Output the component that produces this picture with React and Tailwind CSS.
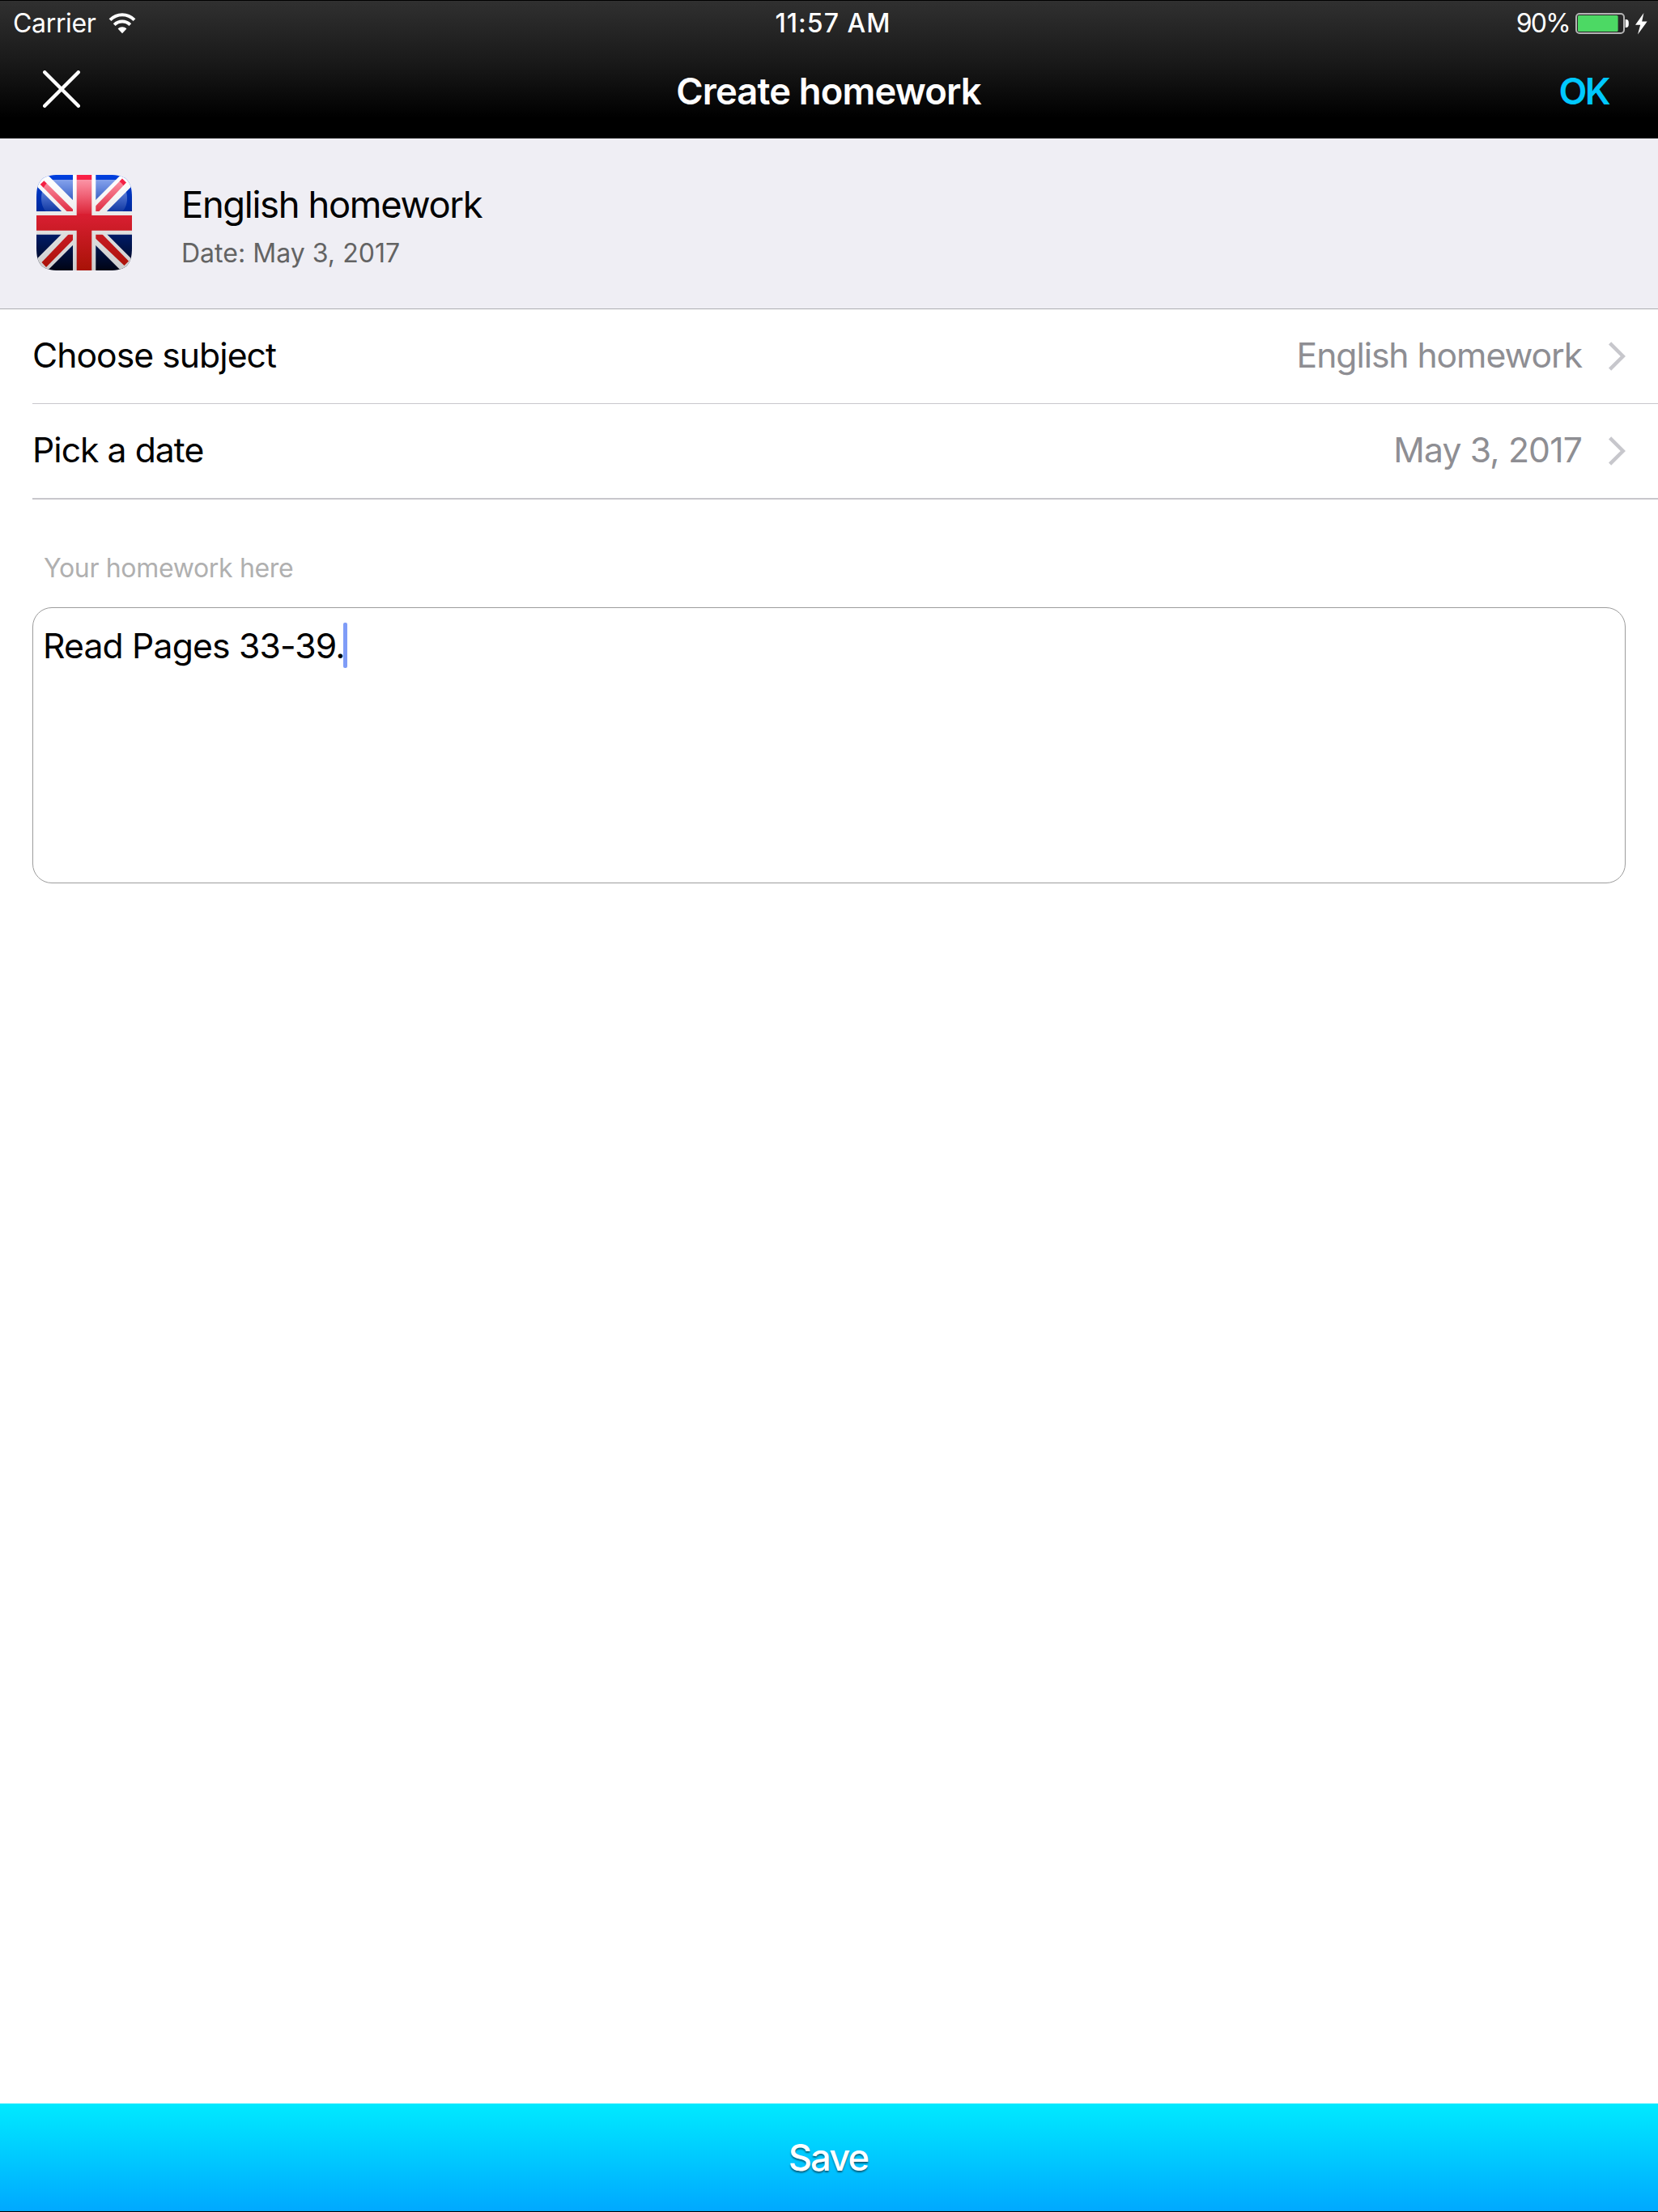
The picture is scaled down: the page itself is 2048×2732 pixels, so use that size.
import React, { useState } from "react";

const WifiIcon = () => (
  <svg width="34" height="26" viewBox="0 0 34 26" fill="none">
    <path d="M2 8.6C10.6 0.1 23.4 0.1 32 8.6" stroke="#fff" strokeWidth="4" />
    <path d="M7.2 14.6C12.8 9.2 21.2 9.2 26.8 14.6" stroke="#fff" strokeWidth="4" />
    <path d="M17 25.2L11.6 19.4C14.6 16.6 19.4 16.6 22.4 19.4Z" fill="#fff" />
  </svg>
);

const BatteryIcon = () => (
  <svg width="67" height="26" viewBox="0 0 67 26" fill="none">
    <rect x="1" y="1" width="59" height="24" rx="4" stroke="#b4b4b4" strokeWidth="2" />
    <rect x="3" y="3" width="49.6" height="20" rx="1.5" fill="#4cd964" />
    <path d="M61.6 8C65 8 65.8 9 65.8 13C65.8 17 65 18 61.6 18Z" fill="#fff" />
  </svg>
);

const BoltIcon = () => (
  <svg width="15" height="27" viewBox="0 0 15 27">
    <path d="M10.4 0L0 14.8H6.2L3 26.6L14.6 10.6H8.2Z" fill="#fff" />
  </svg>
);

const CloseIcon = () => (
  <svg width="46" height="46" viewBox="0 0 46 46" fill="none">
    <path d="M2.2 2.2L43.8 43.8M43.8 2.2L2.2 43.8" stroke="#fff" strokeWidth="4.4" strokeLinecap="round" />
  </svg>
);

const ChevronIcon = () => (
  <svg width="21" height="36" viewBox="0 0 21 36" fill="none">
    <path d="M1.6 1.8L17.8 18L1.6 34.2" stroke="#c7c7cc" strokeWidth="4.5" />
  </svg>
);

const FlagIcon = () => (
  <svg width="118" height="118" viewBox="0 0 118 118">
    <defs>
      <clipPath id="flagClip">
        <path d="M0 28C0 7 7 0 28 0H90C111 0 118 7 118 28V90C118 111 111 118 90 118H28C7 118 0 111 0 90Z" />
      </clipPath>
      <linearGradient id="blue" x1="0" y1="0" x2="0" y2="118" gradientUnits="userSpaceOnUse">
        <stop offset="0" stopColor="#0040e0" />
        <stop offset="0.38" stopColor="#00299a" />
        <stop offset="0.64" stopColor="#001a64" />
        <stop offset="1" stopColor="#000414" />
      </linearGradient>
      <linearGradient id="white" x1="0" y1="0" x2="0" y2="118" gradientUnits="userSpaceOnUse">
        <stop offset="0" stopColor="#ffffff" />
        <stop offset="0.5" stopColor="#e4e4e4" />
        <stop offset="1" stopColor="#cdcdcd" />
      </linearGradient>
      <linearGradient id="red" x1="0" y1="0" x2="0" y2="118" gradientUnits="userSpaceOnUse">
        <stop offset="0" stopColor="#fb2148" />
        <stop offset="0.5" stopColor="#d21d2c" />
        <stop offset="1" stopColor="#a81206" />
      </linearGradient>
      <linearGradient id="gloss" x1="0" y1="6" x2="0" y2="48" gradientUnits="userSpaceOnUse">
        <stop offset="0" stopColor="#fff" stopOpacity="0.52" />
        <stop offset="1" stopColor="#fff" stopOpacity="0.04" />
      </linearGradient>
    </defs>
    <g clipPath="url(#flagClip)">
      <rect width="118" height="118" fill="url(#blue)" />
      <path d="M0 0L118 118M118 0L0 118" stroke="url(#white)" strokeWidth="19.6" />
      <path d="M4.7 11.8L9.4 7.3L46 43.5V46H38.5Z" fill="url(#red)" />
      <path d="M106 4.6L111 9.6L76.5 46H73V38.4Z" fill="url(#red)" />
      <path d="M40 73H46V79.6L12 114L6.5 108Z" fill="url(#red)" />
      <path d="M73 73H81L114 106.5L108.5 112L73 78.5Z" fill="url(#red)" />
      <path d="M45 0H73.3V45H118V73.7H73.3V118H45V73.7H0V45H45Z" fill="url(#white)" />
      <path d="M49.7 0H68.3V50H118V68.7H68.3V118H49.7V68.7H0V50H49.7Z" fill="url(#red)" />
      <path d="M19 6H99C108 10 112 19 112 29C112 37 109 44 103 48H15C9 44 6 37 6 29C6 19 10 10 19 6Z" fill="url(#gloss)" />
    </g>
  </svg>
);

const SettingRow = ({ label, value, valueClass }) => (
  <div className="h-[116px] pr-10 pb-0.5 flex items-center text-[42.67px] leading-[60px]">
    <span className="text-black tracking-[-0.95px]">{label}</span>
    <span className={`ml-auto text-[#8e8e93] ${valueClass}`}>{value}</span>
    <span className="ml-[33px] pt-0.5">
      <ChevronIcon />
    </span>
  </div>
);

export default function App() {
  const [homework] = useState("Read Pages 33-39.");

  return (
    <div className="w-[2048px] h-[2732px] flex flex-col bg-white overflow-hidden font-['Inter',sans-serif] whitespace-nowrap">

      {/* Status bar + navigation */}
      <header className="h-[171px] shrink-0 border-t border-black bg-linear-to-b/srgb from-[#303030] via-[#191919] via-45% to-black to-85% text-white">
        <div className="h-[52px] pt-0.5 pl-4 pr-[13px] grid grid-cols-3 items-center text-[32px] leading-[52px]">
          <div className="flex items-center">
            <span className="tracking-[-0.33px]">Carrier</span>
            <span className="ml-[15px]">
              <WifiIcon />
            </span>
          </div>
          <span className="pl-[7px] text-center font-medium tracking-[1.06px]">11:57 AM</span>
          <div className="flex items-center justify-end">
            <span className="tracking-[-1.7px]">90%</span>
            <span className="ml-[7px]">
              <BatteryIcon />
            </span>
            <span className="ml-[7px]">
              <BoltIcon />
            </span>
          </div>
        </div>

        <div className="h-[118px] pl-[53px] pr-[61px] grid grid-cols-[200px_1fr_192px] items-center text-[45.33px] leading-[60px]">
          <button className="w-fit pb-1">
            <CloseIcon />
          </button>
          <h1 className="pt-0.5 pr-px text-center font-semibold tracking-[-0.85px]">Create homework</h1>
          <button className="pt-0.5 text-right font-semibold tracking-[-2.6px] text-[#00c8ff]">OK</button>
        </div>
      </header>

      {/* Homework summary */}
      <section className="h-[211px] shrink-0 flex pl-[45px] border-b border-[#adadb0] bg-[#efeef4]">
        <div className="pt-[45px]">
          <FlagIcon />
        </div>
        <div className="pt-[52px] pl-[61px]">
          <h2 className="text-[45.33px] leading-[60px] tracking-[-1.34px] text-black">English homework</h2>
          <p className="text-[32px] leading-[59px] tracking-[0.03px] text-[#636363]">Date: May 3, 2017</p>
        </div>
      </section>

      {/* Settings */}
      <section className="shrink-0 ml-10">
        <div className="border-b border-[#c8c7cc]">
          <SettingRow label="Choose subject" value="English homework" valueClass="tracking-[-1.07px]" />
        </div>
        <div className="border-b-2 border-[#c8c7cc]">
          <SettingRow label="Pick a date" value="May 3, 2017" valueClass="tracking-[-0.83px]" />
        </div>
      </section>

      {/* Homework text */}
      <section className="shrink-0 mx-10 pt-[65px]">
        <label className="block pl-[14px] text-[32px] leading-[40px] tracking-[-0.33px] text-[#b0b0b0]">
          Your homework here
        </label>
        <div className="mt-[28px] h-[341px] flex items-start rounded-[24px] border border-[#9c9c9c] pl-3 pt-[18px]">
          <span className="pt-px text-[42.67px] leading-[56px] tracking-[-0.82px] text-black">{homework}</span>
          <span className="-ml-[2px] w-[5px] h-[56px] rounded-[2px] bg-[#7f9cf7]" />
        </div>
      </section>

      {/* Save */}
      <button className="mt-auto h-[134px] pr-0.5 shrink-0 border-b border-black bg-linear-to-b from-[#00eaff] to-[#00a8ff] text-[45.33px] leading-[60px] font-medium tracking-[-1.9px] text-white [text-shadow:0_2px_2px_rgba(0,0,0,0.5)]">
        Save
      </button>
    </div>
  );
}
